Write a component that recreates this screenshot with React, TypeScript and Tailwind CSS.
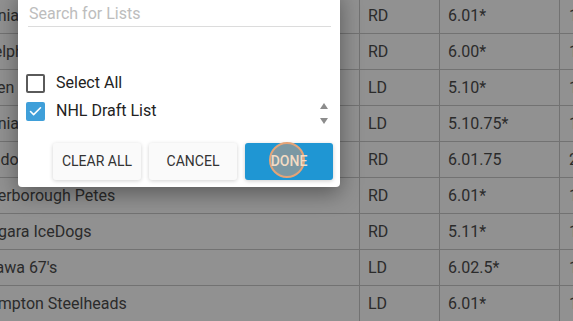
import { Check } from "lucide-react";

const rows = [
  { name: "Sarnia Sting", pos: "RD", height: "6.01*", weight: "185" },
  { name: "Guelph Storm", pos: "RD", height: "6.00*", weight: "178" },
  { name: "Owen Sound Attack", pos: "LD", height: "5.10*", weight: "170" },
  { name: "Sarnia Sting", pos: "LD", height: "5.10.75*", weight: "176" },
  { name: "London Knights", pos: "RD", height: "6.01.75", weight: "201" },
  { name: "Peterborough Petes", pos: "RD", height: "6.01*", weight: "183" },
  { name: "Niagara IceDogs", pos: "RD", height: "5.11*", weight: "172" },
  { name: "Ottawa 67's", pos: "LD", height: "6.02.5*", weight: "190" },
  { name: "Brampton Steelheads", pos: "LD", height: "6.01*", weight: "181" },
];

function Checkbox({ checked }: { checked?: boolean }) {
  if (checked) {
    return (
      <span className="flex h-[19px] w-[19px] items-center justify-center rounded-[2px] bg-[#3f9fd9]">
        <Check size={15} strokeWidth={2.5} className="text-white" />
      </span>
    );
  }
  return <span className="h-[19px] w-[19px] rounded-[2px] border-2 border-[#5a5a5a] bg-white" />;
}

export default function App() {
  return (
    <div
      className="relative h-[321px] w-[573px] overflow-hidden bg-white text-[16px] text-[#4d4d4d]"
      style={{ fontFamily: "Roboto, 'Noto Sans', sans-serif" }}
    >
      {/* table behind the dialog */}
      <div className="ml-[-42px] mt-[-2px]">
        {rows.map((r, i) => (
          <div key={i} className="flex h-[36px] items-center border-b border-[#c8c8c8]">
            <div className="flex h-full w-[402px] shrink-0 items-center border-r border-[#c8c8c8] pl-[16px] whitespace-nowrap">
              {r.name}
            </div>
            <div className="flex h-full w-[80px] shrink-0 items-center border-r border-[#c8c8c8] pl-[8px]">
              {r.pos}
            </div>
            <div className="flex h-full w-[120px] shrink-0 items-center border-r border-[#c8c8c8] pl-[8px]">
              {r.height}
            </div>
            <div className="flex h-full w-[80px] shrink-0 items-center pl-[9px]">{r.weight}</div>
          </div>
        ))}
      </div>

      {/* backdrop */}
      <div className="absolute inset-0 bg-black/[0.43]" />

      {/* dialog */}
      <div className="absolute left-[18px] top-[-9px] w-[322px] rounded-[4px] bg-white pb-[7px] pl-[10px] pr-[7px] pt-[11px] shadow-[0_6px_22px_rgba(0,0,0,0.4)]">
        <div className="mr-[2px] flex h-[25px] items-center border-b border-[#dcdcdc] pl-px text-[#bdbdbd]">
          Search for Lists
        </div>

        <div className="mt-[42px] flex">
          <div className="ml-[-2px] flex flex-1 flex-col text-[#222]">
            <label className="flex h-[28px] items-center gap-[11px]">
              <Checkbox />
              <span>Select All</span>
            </label>
            <label className="flex h-[28px] items-center gap-[11px]">
              <Checkbox checked />
              <span>NHL Draft List</span>
            </label>
          </div>
          <div className="mr-[5px] mt-[34px] flex flex-col items-center gap-[9px]">
            <span className="h-0 w-0 border-x-[4px] border-b-[6px] border-x-transparent border-b-[#8c8c8c]" />
            <span className="h-0 w-0 border-x-[4px] border-t-[6px] border-x-transparent border-t-[#8c8c8c]" />
          </div>
        </div>

        <div className="mt-[18px] flex justify-end gap-[8px] text-[14px]">
          <button className="h-[37px] w-[88px] rounded-[3px] bg-[#fafafa] text-[#333] shadow-[0_1px_4px_rgba(0,0,0,0.18)]">
            CLEAR ALL
          </button>
          <button className="h-[37px] w-[88px] rounded-[3px] bg-[#fafafa] text-[#333] shadow-[0_1px_4px_rgba(0,0,0,0.18)]">
            CANCEL
          </button>
          <button className="relative flex h-[37px] w-[88px] items-center justify-center rounded-[3px] bg-[#1f96d3] font-medium text-[#f3dcc4] shadow-[0_1px_4px_rgba(0,0,0,0.2)]">
            <span className="absolute left-[24px] top-[-1px] h-[36px] w-[36px] rounded-full border-2 border-[#e4a478] bg-[#7b98a3]" />
            <span className="relative">DONE</span>
          </button>
        </div>
      </div>
    </div>
  );
}
